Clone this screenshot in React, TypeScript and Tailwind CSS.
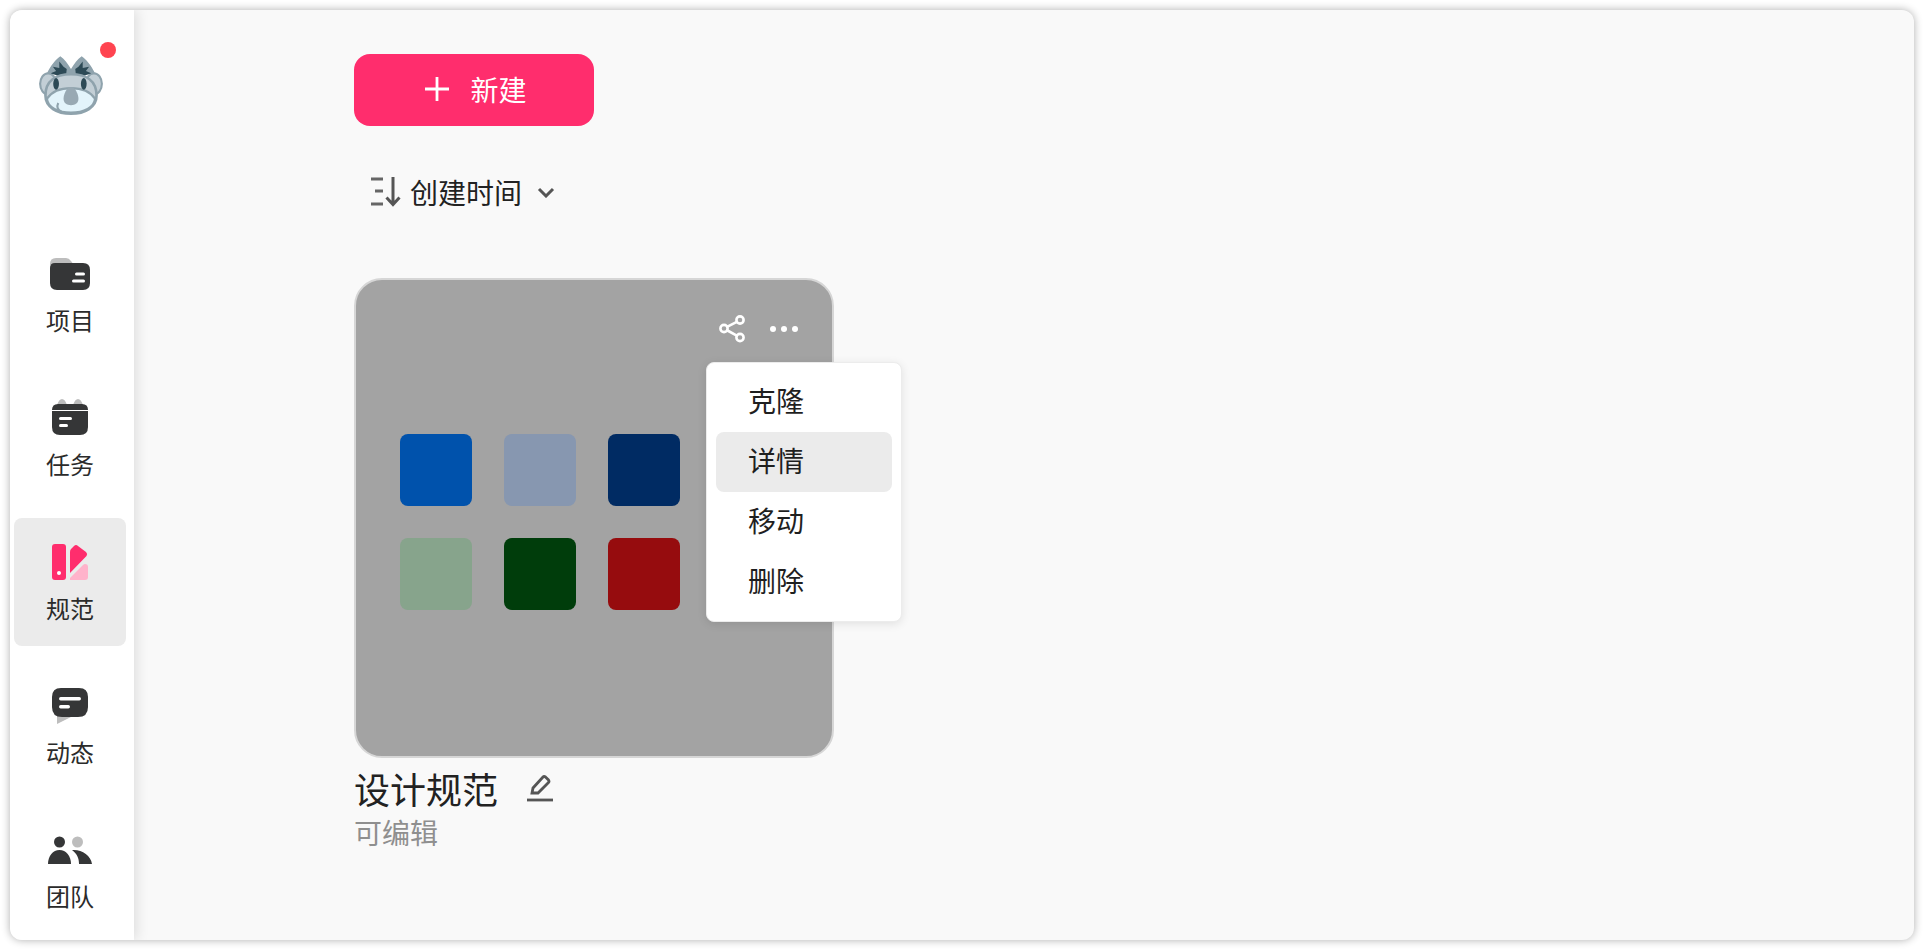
const font = { fontFamily: '"Noto Sans CJK SC", "Noto Sans", sans-serif' };

function Koala() {
  return (
    <svg width="66" height="64" viewBox="0 0 62 60">
      <ellipse cx="9.5" cy="28" rx="7.5" ry="10" fill="#c3cfd6" stroke="#8fa3ad" strokeWidth="2" />
      <ellipse cx="52.5" cy="28" rx="7.5" ry="10" fill="#c3cfd6" stroke="#8fa3ad" strokeWidth="2" />
      <path d="M8 19 C12 10 17 5 21 2 C25 5 28 9 31 14 C34 9 37 5 41 2 C45 5 50 10 54 19 Z" fill="#8fa3ad" />
      <path d="M12 18 L17 16 L14 12 L20 13 L20 7 L24 12 L27 14 L26 23 Z" fill="#2d4a56" />
      <path d="M50 18 L45 16 L48 12 L42 13 L42 7 L38 12 L35 14 L36 23 Z" fill="#2d4a56" />
      <path d="M31 19 C45 19 55 25 55 39 C55 50 44 56 31 56 C18 56 7 50 7 39 C7 25 17 19 31 19 Z" fill="#c3cfd6" stroke="#8fa3ad" strokeWidth="2.5" />
      <path d="M8.5 42 C13 35 22 32 31 32 C40 32 49 35 53.5 42 C53 50 43 55 31 55 C19 55 9 50 8.5 42 Z" fill="#e3f4fb" stroke="#8fa3ad" strokeWidth="2" />
      <ellipse cx="17" cy="28" rx="2.7" ry="5.5" fill="#2d4a56" />
      <ellipse cx="43" cy="28" rx="2.7" ry="5.5" fill="#2d4a56" />
      <path d="M31 31 C35 31 38 38 38 42 C38 46 35 48 31 48 C27 48 24 46 24 42 C24 38 27 31 31 31 Z" fill="#98a9b3" />
      <path d="M19 46 C17 50 19 53 22 54" fill="none" stroke="#8fa3ad" strokeWidth="2" />
    </svg>
  );
}

function FolderIcon() {
  return (
    <svg width="40" height="32" viewBox="0 0 40 32">
      <path d="M0 6 Q0 0 6 0 H16 Q19 0 21 3 L24 7 H0 Z" fill="#bdbdbd" />
      <path d="M0 10 Q0 5 5 5 H33 Q40 5 40 12 V25 Q40 32 33 32 H7 Q0 32 0 25 Z" fill="#353637" />
      <rect x="25" y="14.5" width="10" height="3" rx="1.5" fill="#fff" />
      <rect x="22" y="21.5" width="13" height="3" rx="1.5" fill="#fff" />
    </svg>
  );
}

function CalendarIcon() {
  return (
    <svg width="36" height="36" viewBox="0 0 36 36">
      <path d="M5 6 Q7 0 10 0 Q13 0 15 6 Z M21 6 Q23 0 26 0 Q29 0 31 6 Z" fill="#bdbdbd" />
      <path d="M0 11 Q0 5 6 5 H30 Q36 5 36 11 Z" fill="#353637" />
      <path d="M0 12 H36 V28 Q36 36 28 36 H8 Q0 36 0 28 Z" fill="#353637" />
      <rect x="7" y="18" width="13" height="3" rx="1.5" fill="#fff" />
      <rect x="7" y="25" width="9" height="3" rx="1.5" fill="#fff" />
    </svg>
  );
}

function SpecIcon() {
  return (
    <svg width="37" height="36" viewBox="0 0 37 36">
      <rect x="0" y="0" width="14" height="36" rx="3" fill="#ff2d6d" />
      <circle cx="7" cy="29" r="2" fill="#fff" />
      <path d="M18 8 Q18 6 19 5 L22 2 Q24 0 26 2 L34 8 Q36 10 34.5 12 L18 29 Z" fill="#ff2d6d" />
      <path d="M18 36 V34 L31 21 Q32 20 33 20 Q36 20 36 23 V33 Q36 36 33 36 Z" fill="#ffb3cb" />
    </svg>
  );
}

function ChatIcon() {
  return (
    <svg width="36" height="36" viewBox="0 0 36 36">
      <path d="M5 26 V36 Q5 36 7 35 L19 29 Z" fill="#bdbdbd" />
      <path d="M0 9 Q0 0 9 0 H27 Q36 0 36 9 V19 Q36 29 26 29 H10 Q0 29 0 19 Z" fill="#353637" />
      <rect x="7" y="9" width="22" height="3.4" rx="1.7" fill="#fff" />
      <rect x="7" y="17" width="11" height="3.4" rx="1.7" fill="#fff" />
    </svg>
  );
}

function TeamIcon() {
  return (
    <svg width="44" height="29" viewBox="0 0 44 29">
      <circle cx="11.5" cy="6" r="5.5" fill="#353637" />
      <circle cx="29.5" cy="6" r="5.5" fill="#bdbdbd" />
      <path d="M0 28 C0 20 5 14 11.5 14 C18 14 23 20 23 28 Z" fill="#353637" />
      <path d="M24 14 C33 13 43 19 44 28 H31 C31 22 29 18 24 14 Z" fill="#353637" />
    </svg>
  );
}

function SortIcon() {
  return (
    <svg width="32" height="30" viewBox="0 0 32 30" fill="none" stroke="#666" strokeWidth="3">
      <path d="M0 2 H12 M4 14 H12 M0 27 H12" />
      <path d="M22 0 V27 M15.5 20.5 L22 27.5 L28.5 20.5" stroke="#555" />
    </svg>
  );
}

const navItems = [
  { label: "项目", icon: <FolderIcon />, wrap: "flex h-[72px] items-end justify-center pb-[12px]" },
  { label: "任务", icon: <CalendarIcon />, wrap: "flex h-[72px] items-end justify-center pb-[11px]" },
  { label: "规范", icon: <SpecIcon />, wrap: "flex h-[72px] items-end justify-center pb-[10px]", active: true },
  { label: "动态", icon: <ChatIcon />, wrap: "flex h-[72px] items-end justify-center pb-[10px]" },
  { label: "团队", icon: <TeamIcon />, wrap: "flex h-[72px] items-end justify-center pb-[13px]" },
];

const swatches = ["#0052ac", "#8797b0", "#002b63", "#8797b0", "#87a48c", "#003d0b", "#960c0e", "#87a48c"];
const menu = ["克隆", "详情", "移动", "删除"];

export default function App() {
  return (
    <div className="h-[950px] w-[1924px] bg-white p-[10px]" style={font}>
      <div className="flex h-[930px] w-[1904px] overflow-hidden rounded-[12px] bg-[#f9f9f9] shadow-[0_0_9px_rgba(0,0,0,0.32)]">
        <aside className="z-10 flex w-[124px] shrink-0 flex-col items-center bg-white px-1 shadow-[3px_0_12px_rgba(0,0,0,0.11)]">
          <div className="relative mt-[44px] mb-[112px] ml-[-3px] h-[64px] w-[66px]">
            <Koala />
            <span className="absolute top-[-12px] left-[62px] h-4 w-4 rounded-full bg-[#ff4450]" />
          </div>
          <nav className="flex w-full flex-col gap-4">
            {navItems.map((item) => (
              <a
                key={item.label}
                className={
                  item.active
                    ? "flex h-[128px] w-[112px] flex-col items-center rounded-[8px] bg-[#ebebeb]"
                    : "flex h-[128px] w-[112px] flex-col items-center rounded-[8px]"
                }
              >
                <span className={item.wrap}>{item.icon}</span>
                <span className="text-[24px] leading-[36px] text-[#2b2b2b]">{item.label}</span>
              </a>
            ))}
          </nav>
        </aside>

        <main className="flex-1 pt-[44px] pl-[220px]">
          <button className="flex h-[72px] w-[240px] items-center justify-center gap-[20px] rounded-[16px] bg-[#ff2d6d] pb-[2px] pl-[3px] text-[28px] text-white">
            <svg width="26" height="26" viewBox="0 0 26 26" stroke="#fff" strokeWidth="2.8">
              <path d="M13 1 V25 M1 13 H25" />
            </svg>
            新建
          </button>

          <div className="mt-[50px] flex h-[32px] items-center pl-[17px]">
            <SortIcon />
            <span className="ml-[7px] text-[28px] leading-[32px] text-[#222]">创建时间</span>
            <svg className="ml-[15px]" width="18" height="11" viewBox="0 0 18 11" fill="none" stroke="#555" strokeWidth="3">
              <path d="M2 2 L9 9 L16 2" />
            </svg>
          </div>

          <div className="mt-[70px] w-[480px]">
            <div className="relative h-[480px] w-[480px] rounded-[28px] border-2 border-[#d6d6d6] bg-[#a3a3a3]">
              <div className="flex items-center justify-end gap-[24px] pt-[35px] pr-[33px]">
                <svg width="26" height="28" viewBox="0 0 26 28" fill="none" stroke="#fff" strokeWidth="2.6">
                  <circle cx="21" cy="5" r="3.6" />
                  <circle cx="5" cy="13.5" r="3.6" />
                  <circle cx="21" cy="22.5" r="3.6" />
                  <path d="M8.5 11.7 L17.8 6.8 M8.5 15.5 L17.8 20.7" />
                </svg>
                <svg width="30" height="8" viewBox="0 0 30 8" fill="#fff">
                  <circle cx="4" cy="4" r="3" />
                  <circle cx="15" cy="4" r="3" />
                  <circle cx="26" cy="4" r="3" />
                </svg>
              </div>
              <div className="mt-[91px] ml-[44px] grid w-[384px] grid-cols-[repeat(4,72px)] gap-8">
                {swatches.map((color, i) => (
                  <div key={i} className="h-[72px] w-[72px] rounded-[8px]" style={{ backgroundColor: color }} />
                ))}
              </div>
              <div className="absolute top-[82px] left-[350px] z-10 w-[196px] rounded-[8px] border border-[#ececec] bg-white p-[9px] shadow-[0_2px_10px_rgba(0,0,0,0.1)]">
                {menu.map((m) => (
                  <div
                    key={m}
                    className={
                      m === "详情"
                        ? "flex h-[60px] items-center rounded-[8px] bg-[#ebebeb] pb-[4px] pl-[32px] text-[28px] text-[#1f1f1f]"
                        : "flex h-[60px] items-center rounded-[8px] pb-[4px] pl-[32px] text-[28px] text-[#1f1f1f]"
                    }
                  >
                    {m}
                  </div>
                ))}
              </div>
            </div>
            <div className="mt-[6px] flex items-center">
              <span className="text-[36px] leading-[48px] text-[#222]">设计规范</span>
              <svg className="ml-[28px]" width="28" height="28" viewBox="0 0 28 28" fill="none" stroke="#555" strokeWidth="2.8">
                <path d="M6 19 L7 14 L17 3 Q18 2 19.5 3 L22.5 6 Q23.5 7.5 22.5 8.5 L12 19 Z" />
                <path d="M1 26 H27" />
              </svg>
            </div>
            <div className="mt-[1px] text-[28px] leading-[38px] text-[#8f8f8f]">可编辑</div>
          </div>
        </main>
      </div>
    </div>
  );
}
